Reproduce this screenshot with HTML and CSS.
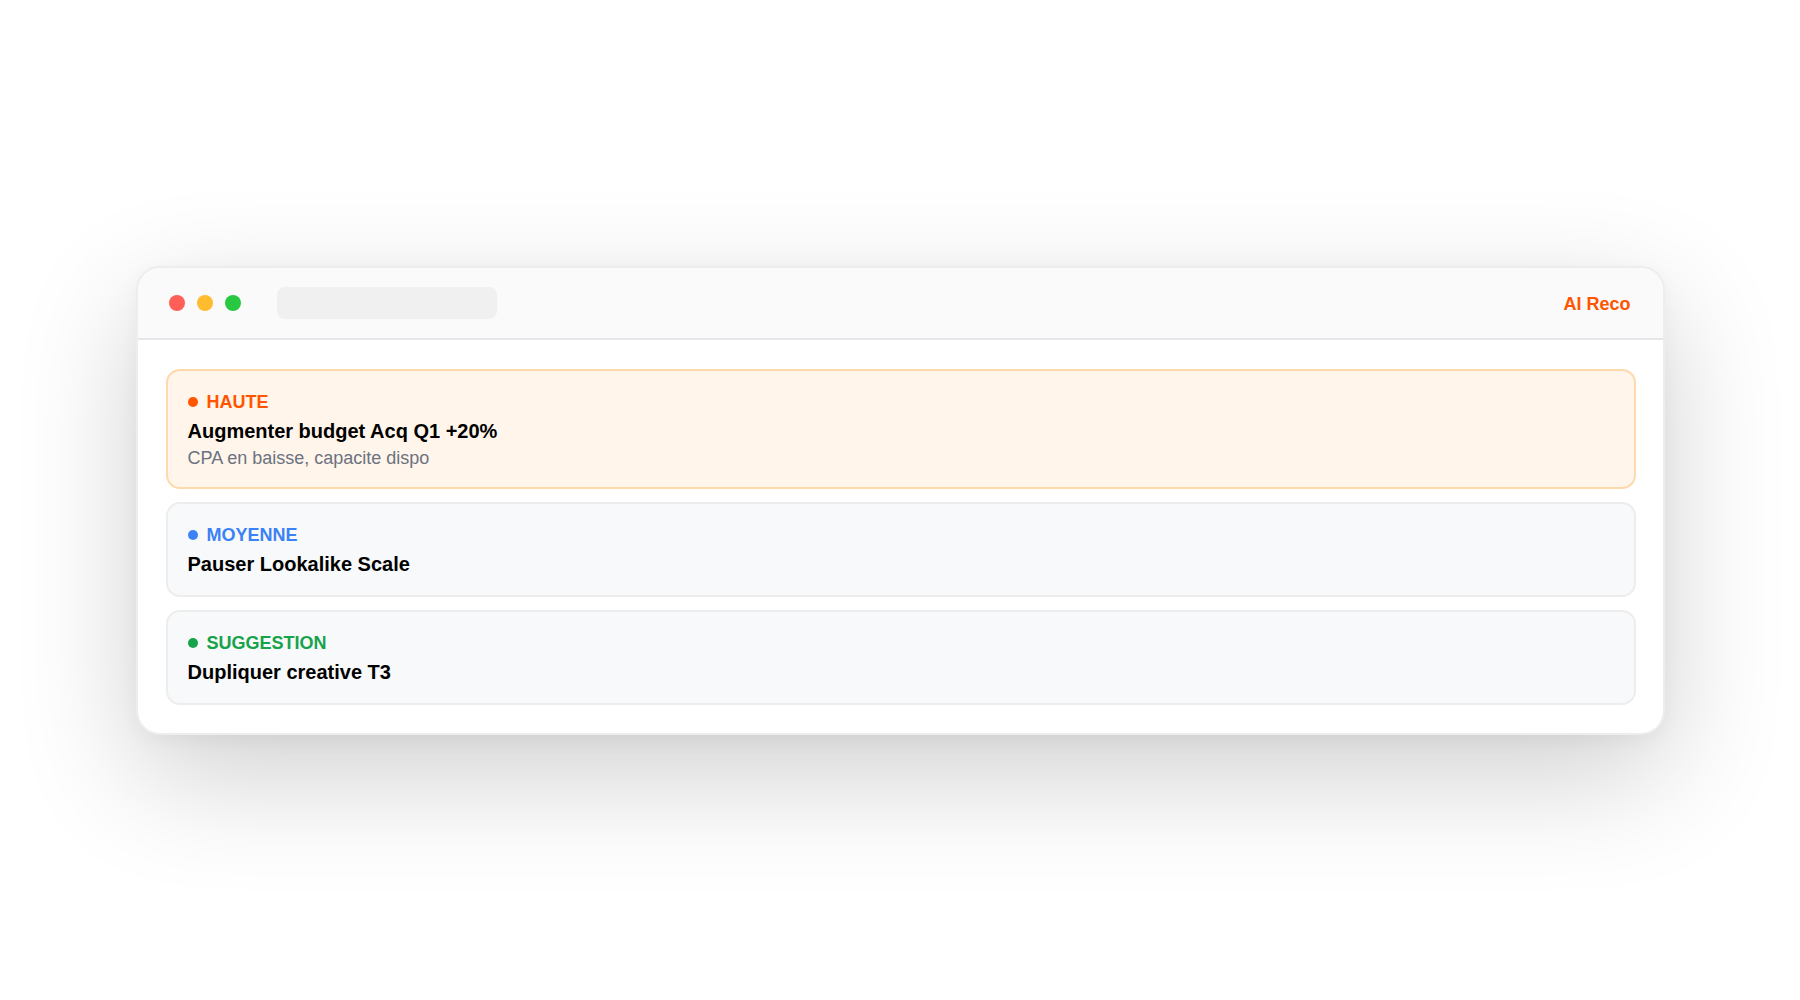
FILE: index.html
```html
<!DOCTYPE html>
<html lang="fr">
<head>
<meta charset="utf-8">
<title>AI Reco</title>
<link rel="stylesheet" href="styles.css">
</head>
<body>
  <div class="window">
    <div class="titlebar">
      <div class="lights">
        <span class="light red"></span>
        <span class="light yellow"></span>
        <span class="light green"></span>
      </div>
      <div class="address"></div>
      <div class="app-name">AI Reco</div>
    </div>
    <div class="content">
      <div class="card card-high">
        <div class="label label-high"><span class="dot"></span>HAUTE</div>
        <div class="title">Augmenter budget Acq Q1 +20%</div>
        <div class="sub">CPA en baisse, capacite dispo</div>
      </div>
      <div class="card">
        <div class="label label-mid"><span class="dot"></span>MOYENNE</div>
        <div class="title">Pauser Lookalike Scale</div>
      </div>
      <div class="card">
        <div class="label label-sugg"><span class="dot"></span>SUGGESTION</div>
        <div class="title">Dupliquer creative T3</div>
      </div>
    </div>
  </div>
</body>
</html>
```
FILE: styles.css
```css
* { box-sizing: border-box; }
html, body { margin: 0; padding: 0; }
body {
  width: 1800px;
  height: 1000px;
  background: #ffffff;
  font-family: "Liberation Sans", Arial, Helvetica, sans-serif;
  display: flex;
  align-items: center;
  justify-content: center;
}
.window {
  width: 1529px;
  background: #ffffff;
  border: 2px solid #ededed;
  border-radius: 24px;
  overflow: hidden;
  box-shadow: 0 40px 120px rgba(0, 0, 0, 0.19), 0 6px 20px rgba(0, 0, 0, 0.04);
}
.titlebar {
  height: 72px;
  background: #fafafa;
  border-bottom: 2px solid #e6e6ea;
  display: flex;
  align-items: center;
  padding: 1px 32px 0 31px;
}
.lights { display: flex; gap: 12px; }
.light { width: 16px; height: 16px; border-radius: 50%; display: block; }
.red { background: #ff5f57; }
.yellow { background: #febc2e; }
.green { background: #28c840; }
.address {
  width: 220px;
  height: 32px;
  border-radius: 8px;
  background: #f0f0f0;
  margin-left: 36px;
}
.app-name {
  margin-left: auto;
  margin-top: 2px;
  color: #ff5500;
  font-weight: 700;
  font-size: 18px;
  line-height: 22px;
}
.content {
  padding: 29px 27px 28px 28px;
  display: flex;
  flex-direction: column;
  gap: 13px;
}
.card {
  background: #f8f9fa;
  border: 2px solid #ededed;
  border-radius: 14px;
  padding: 20px 20px 17px;
}
.card-high {
  background: #fff5eb;
  border-color: #fdd9ac;
}
.label {
  display: flex;
  align-items: center;
  gap: 9px;
  font-size: 18px;
  line-height: 22px;
  font-weight: 700;
}
.dot { width: 10px; height: 10px; border-radius: 50%; background: currentColor; display: block; }
.label-high { color: #ff5500; }
.label-mid { color: #3b82f6; }
.label-sugg { color: #16a34a; }
.title {
  margin-top: 4px;
  font-size: 20px;
  line-height: 28px;
  font-weight: 700;
  color: #000000;
}
.sub {
  margin-top: 1px;
  font-size: 18px;
  line-height: 24px;
  color: #6b7280;
}
```
